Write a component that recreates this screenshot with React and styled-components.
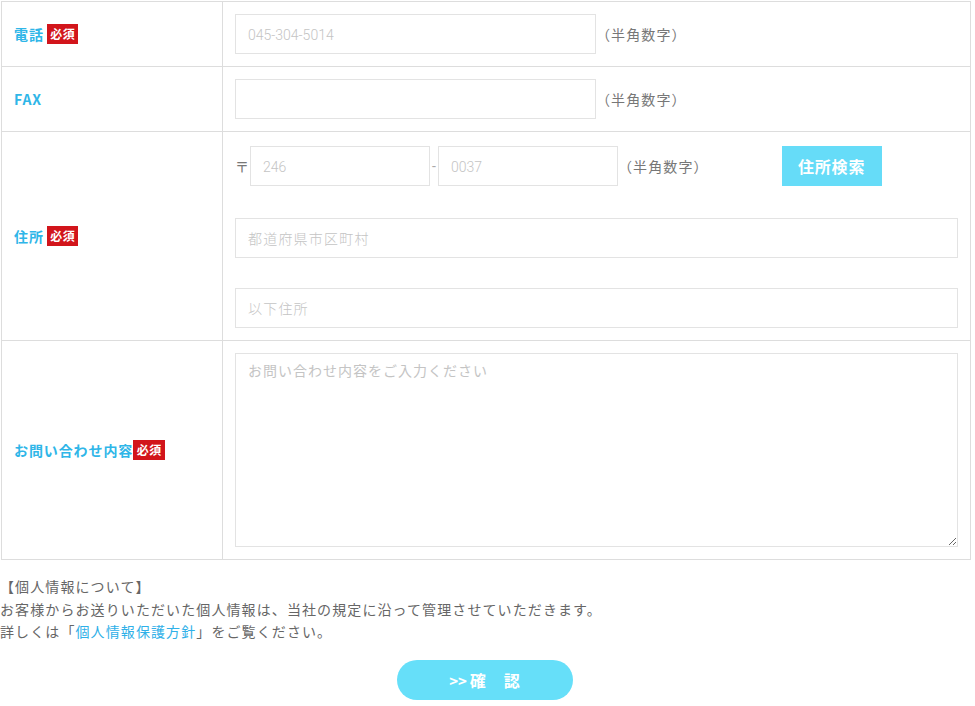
import React from 'react'
import styled, { createGlobalStyle } from 'styled-components'

const GlobalStyle = createGlobalStyle`
  body {
    margin: 0;
    background: #fff;
    font-family: Roboto, "Noto Sans CJK JP", sans-serif;
    color: #666;
  }
`;

const Page = styled.div`
  width: 975px;
  padding-top: 1px;
`;

const FormTable = styled.table`
  margin-left: 1px;
  width: 970px;
  border-collapse: collapse;
  td, th {
    border: 1px solid #ddd;
  }
`;

const Label = styled.th`
  width: 208px;
  padding: 0 0 0 12px;
  text-align: left;
  font-size: 14px;
  font-weight: bold;
  letter-spacing: 0.9px;
  color: #2fb6e8;
  font-family: "Noto Sans CJK JP", sans-serif;
  white-space: nowrap;
`;

const Badge = styled.span`
  display: inline-block;
  margin-left: ${p => (p.$tight ? '0' : '3px')};
  padding: 0 3px 0 3.5px;
  height: 20px;
  line-height: 20px;
  background: #d2151b;
  color: #fff;
  font-size: 12px;
  font-weight: bold;
  letter-spacing: 0.5px;
  vertical-align: 1px;
`;

const Cell = styled.td`
  padding: ${p => p.$pad || '12px 12px'};
  vertical-align: top;
`;

const Line = styled.div`
  display: flex;
  align-items: center;
  margin-top: ${p => p.$mt || 0}px;
`;

const Input = styled.input`
  box-sizing: border-box;
  width: ${p => p.$w || '100%'};
  height: 40px;
  border: 1px solid #e3e3e3;
  padding: 2px 12px 0;
  font-family: Roboto, "Noto Sans CJK JP", sans-serif;
  font-size: 14px;
  font-weight: 300;
  letter-spacing: ${p => (p.$jp ? '1.2px' : '0')};
  color: #666;
  outline: none;
  &::placeholder {
    color: #c4c4c4;
  }
`;

const TextArea = styled.textarea`
  display: block;
  box-sizing: border-box;
  width: 100%;
  height: 194px;
  border: 1px solid #e3e3e3;
  padding: 6px 12px;
  font-family: "Noto Sans CJK JP", sans-serif;
  font-size: 14px;
  letter-spacing: 1px;
  color: #666;
  outline: none;
  &::placeholder {
    color: #c4c4c4;
  }
`;

const Note = styled.span`
  font-size: 14px;
  letter-spacing: 1.1px;
  color: #777;
  font-family: "Noto Sans CJK JP", sans-serif;
`;

const Mark = styled.span`
  width: 15px;
  font-size: 14px;
  color: #777;
  font-family: "Noto Sans CJK JP", sans-serif;
`;

const Dash = styled.span`
  width: 8px;
  text-align: center;
  font-size: 14px;
  color: #aaa;
`;

const SearchButton = styled.button`
  margin-left: 73px;
  width: 100px;
  height: 40px;
  border: none;
  background: #66dcf8;
  color: #fff;
  font-family: "Noto Sans CJK JP", sans-serif;
  font-weight: bold;
  font-size: 16px;
  letter-spacing: 0.8px;
  cursor: pointer;
`;

const Privacy = styled.div`
  margin-top: 15px;
  font-family: "Noto Sans CJK JP", sans-serif;
  font-size: 14px;
  line-height: 22.5px;
  letter-spacing: 1.1px;
  color: #666;
  p {
    margin: 0;
  }
  a {
    color: #2fb0e8;
    text-decoration: none;
  }
`;

const Actions = styled.div`
  display: flex;
  justify-content: center;
  width: 970px;
  margin-top: 17px;
`;

const ConfirmButton = styled.button`
  width: 176px;
  height: 40px;
  border: none;
  border-radius: 20px;
  background: #66dff9;
  color: #fff;
  font-family: "Noto Sans CJK JP", sans-serif;
  font-weight: bold;
  font-size: 16px;
  letter-spacing: 1px;
  cursor: pointer;
  span {
    font-size: 15px;
    margin-right: 3px;
    letter-spacing: 0;
  }
`;

export default function App() {
  return (
    <Page>
      <GlobalStyle />
      <FormTable>
        <tbody>
          <tr style={{ height: 65 }}>
            <Label>電話<Badge>必須</Badge></Label>
            <Cell>
              <Line>
                <Input $w="361px" placeholder="045-304-5014" />
                <Note>（半角数字）</Note>
              </Line>
            </Cell>
          </tr>
          <tr style={{ height: 65 }}>
            <Label>FAX</Label>
            <Cell>
              <Line>
                <Input $w="361px" />
                <Note>（半角数字）</Note>
              </Line>
            </Cell>
          </tr>
          <tr>
            <Label>住所<Badge>必須</Badge></Label>
            <Cell $pad="14px 12px 12px">
              <Line>
                <Mark>〒</Mark>
                <Input $w="180px" placeholder="246" />
                <Dash>-</Dash>
                <Input $w="180px" placeholder="0037" />
                <Note>（半角数字）</Note>
                <SearchButton type="button">住所検索</SearchButton>
              </Line>
              <Line $mt={32}>
                <Input $jp placeholder="都道府県市区町村" />
              </Line>
              <Line $mt={30}>
                <Input $jp placeholder="以下住所" />
              </Line>
            </Cell>
          </tr>
          <tr>
            <Label>お問い合わせ内容<Badge $tight>必須</Badge></Label>
            <Cell $pad="12px 12px 12px">
              <TextArea placeholder="お問い合わせ内容をご入力ください" />
            </Cell>
          </tr>
        </tbody>
      </FormTable>
      <Privacy>
        <p>【個人情報について】</p>
        <p>お客様からお送りいただいた個人情報は、当社の規定に沿って管理させていただきます。</p>
        <p>詳しくは「<a href="#">個人情報保護方針</a>」をご覧ください。</p>
      </Privacy>
      <Actions>
        <ConfirmButton type="button"><span>&gt;&gt;</span>確　認</ConfirmButton>
      </Actions>
    </Page>
  )
}
